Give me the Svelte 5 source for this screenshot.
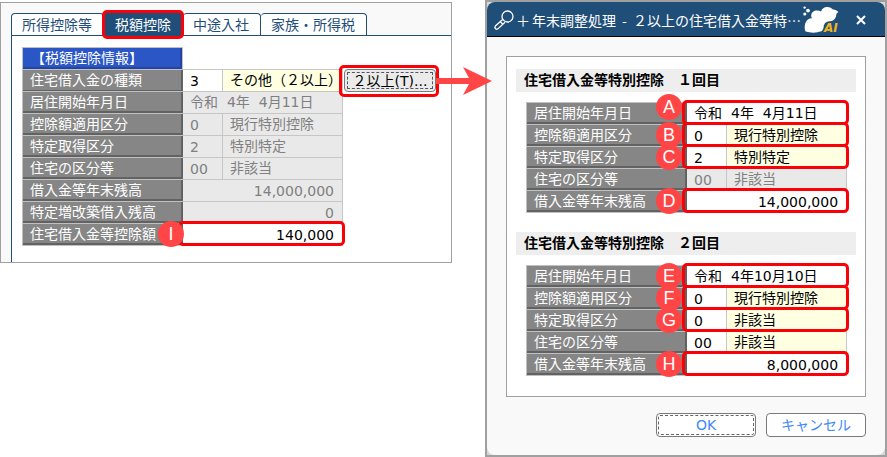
<script lang="ts">
  interface Field {
    id: string;
    label: string;
    value: string;
    name?: string;
    amount?: boolean;
    disabled?: boolean;
    mark?: string;
    raised?: boolean;
    action?: string;
  }

  interface Section {
    title: string;
    fields: Field[];
  }

  const tabs = ['所得控除等', '税額控除', '中途入社', '家族・所得税'];
  let activeTab = $state('税額控除');

  // Dates are padded with figure spaces so that the digits line up
  const deduction: Field[] = [
    { id: 'kind', label: '住宅借入金の種類', value: '3', name: 'その他（２以上）', action: '２以上(T)...' },
    { id: 'start', label: '居住開始年月日', value: '令和\u20074年\u20074月11日', disabled: true },
    { id: 'apply', label: '控除額適用区分', value: '0', name: '現行特別控除', disabled: true },
    { id: 'acquire', label: '特定取得区分', value: '2', name: '特別特定', disabled: true },
    { id: 'house', label: '住宅の区分等', value: '00', name: '非該当', disabled: true },
    { id: 'balance', label: '借入金等年末残高', value: '14,000,000', amount: true, disabled: true },
    { id: 'extension', label: '特定増改築借入残高', value: '0', amount: true, disabled: true },
    { id: 'credit', label: '住宅借入金等控除額', value: '140,000', amount: true, mark: 'I' },
  ];

  const sections: Section[] = [
    {
      title: '住宅借入金等特別控除　１回目',
      fields: [
        { id: 'start1', label: '居住開始年月日', value: '令和\u20074年\u20074月11日', mark: 'A', raised: true },
        { id: 'apply1', label: '控除額適用区分', value: '0', name: '現行特別控除', mark: 'B' },
        { id: 'acquire1', label: '特定取得区分', value: '2', name: '特別特定', mark: 'C' },
        { id: 'house1', label: '住宅の区分等', value: '00', name: '非該当', disabled: true },
        { id: 'balance1', label: '借入金等年末残高', value: '14,000,000', amount: true, mark: 'D' },
      ],
    },
    {
      title: '住宅借入金等特別控除　２回目',
      fields: [
        { id: 'start2', label: '居住開始年月日', value: '令和\u20074年10月10日', mark: 'E' },
        { id: 'apply2', label: '控除額適用区分', value: '0', name: '現行特別控除', mark: 'F' },
        { id: 'acquire2', label: '特定取得区分', value: '0', name: '非該当', mark: 'G' },
        { id: 'house2', label: '住宅の区分等', value: '00', name: '非該当' },
        { id: 'balance2', label: '借入金等年末残高', value: '8,000,000', amount: true, mark: 'H' },
      ],
    },
  ];
</script>

{#snippet row(field: Field)}
  <div class="row" class:disabled={field.disabled}>
    <label for={field.id}>{field.label}</label>
    <input
      id={field.id}
      class:date={!field.name && !field.amount}
      class:amount={field.amount}
      type="text"
      value={field.value}
      disabled={field.disabled}
    />
    {#if field.name}
      <output for={field.id}>{field.name}</output>
    {/if}
    {#if field.action}
      <button class="button action" type="button">
        {field.action}
        <span class="outline"></span>
        <svg class="arrow" viewBox="0 0 56 28" aria-hidden="true">
          <path d="M0 11H33L27 0L56 14L27 28L33 17H0Z" />
        </svg>
      </button>
    {/if}
    {#if field.mark}
      <span class="outline"></span>
      <span class="badge" class:raised={field.raised}>{field.mark}</span>
    {/if}
  </div>
{/snippet}

<main>
  <section class="window">
    <div class="tabs" role="tablist">
      {#each tabs as tab}
        <button
          class="tab"
          class:active={tab === activeTab}
          type="button"
          role="tab"
          aria-selected={tab === activeTab}
          onclick={() => (activeTab = tab)}
        >
          {tab}
        </button>
      {/each}
    </div>
    <div class="page">
      <h2 class="caption">【税額控除情報】</h2>
      <div class="rows">
        {#each deduction as field}
          {@render row(field)}
        {/each}
      </div>
    </div>
  </section>

  <section class="dialog" role="dialog" aria-labelledby="dialog-title">
    <div class="frame">
      <header>
        <svg class="lens" viewBox="0 0 20 20" aria-hidden="true">
          <circle cx="13.5" cy="6.5" r="5.5" />
          <path d="M8.6 9.6L1.4 16Q.4 17.6 1.6 18.8Q3 19.8 4.4 18.4L11 12.2" />
          <path d="M6.4 11.8L8.8 14.2" />
        </svg>
        <span>＋</span>
        <h1 id="dialog-title">
          <span>年末調整処理</span><span>-</span><span>２以上の住宅借入金等特…</span>
        </h1>
        <svg class="cloud" viewBox="0 0 40 28" aria-hidden="true">
          <circle cx="1.6" cy="1.6" r="1.2" />
          <circle cx="5" cy="4.6" r="1.9" />
          <circle cx="1.8" cy="8" r="1.6" />
          <path
            d="M2.5 25.5C1 22 1.5 16 5 13.5Q7 12 9 12.3C7 9 9 5 13 4.5Q16 4 18 5.5C19 2 22 .5 25 1Q28 1.2 30 3.5Q33 3.2 35.5 6Q33 7 33 10.5C32 14 29 15.5 26.5 15.2C22 15.5 21 18 20.5 22L19 25Q11 28 2.5 25.5Z"
          />
          <text x="21" y="26">AI</text>
        </svg>
        <button class="close" type="button" aria-label="閉じる">
          <svg viewBox="0 0 10 10" aria-hidden="true"><path d="M1 1L9 9M9 1L1 9" /></svg>
        </button>
      </header>
      <div class="body">
        <div class="panel">
          {#each sections as section}
            <h2>{section.title}</h2>
            <div class="rows">
              {#each section.fields as field}
                {@render row(field)}
              {/each}
            </div>
          {/each}
        </div>
        <footer>
          <button class="button primary" type="button">OK</button>
          <button class="button" type="button">キャンセル</button>
        </footer>
      </div>
    </div>
  </section>
</main>

<style>
  :global(body) {
    margin: 0;
    background: #fff;
  }

  main,
  button,
  input {
    font-family: 'DejaVu Sans', 'Noto Sans CJK JP', sans-serif;
    font-size: 14px;
    line-height: 20px;
  }

  main,
  main * {
    box-sizing: border-box;
  }

  main {
    display: grid;
    grid-template-columns: 9fr 8fr;
    align-items: start;
    gap: 33px;
  }

  h1,
  h2 {
    margin: 0;
    font-size: 14px;
    font-weight: 400;
  }

  .window {
    margin-top: 2px;
    padding: 10px 0 0 10px;
    border: 1px solid #a0a0a0;
    background: #f9f9f9;
  }

  .tabs {
    display: flex;
    height: 23px;
    border-bottom: 1px solid #1f4e79;
  }

  .tab {
    height: 22px;
    padding: 0 11px 0 10px;
    border: 1px solid #1f4e79;
    border-bottom: none;
    border-left-width: 0;
    border-radius: 4px 4px 0 0;
    background: #fff;
    color: #1f4e79;
    white-space: nowrap;
  }

  .tab:first-child {
    border-left-width: 1px;
  }

  .tab.active {
    z-index: 1;
    margin: -2px 0 -3px -1px;
    height: 27px;
    padding: 0 12px;
    border: none;
    border-radius: 4px;
    outline: 3px solid #fb0007;
    outline-offset: -2px;
    background: #1f4e79;
    color: #fff;
  }

  .page {
    padding: 11px 10px 16px;
    border-left: 1px solid #1f4e79;
    background: #fff;
  }

  .caption {
    width: 161px;
    height: 22px;
    padding-left: 8px;
    border: 1px solid #c0c0c0;
    border-bottom: none;
    box-shadow: inset -2px -2px #2244a4;
    background: #2a56c6;
    color: #fff;
  }

  .rows {
    border-bottom: 1px solid #c0c0c0;
    width: 321px;
  }

  .row {
    position: relative;
    display: grid;
    grid-template-columns: 161px 40px 120px auto;
    height: 22px;
  }

  label {
    padding-left: 7px;
    border-top: 1px solid #c0c0c0;
    border-left: 1px solid #c0c0c0;
    box-shadow: inset -2px -2px #626262;
    background: #868686;
    color: #fff;
    white-space: nowrap;
  }

  input,
  output {
    min-width: 0;
    height: 22px;
    margin: 0;
    padding: 0 7px;
    border: 0 solid #c6c6c6;
    border-width: 1px 1px 0 0;
    border-radius: 0;
    background: #fff;
    color: #000;
    white-space: nowrap;
  }

  input.date,
  input.amount {
    grid-column: span 2;
  }

  input.date {
    padding-bottom: 4px;
  }

  input.amount {
    padding-right: 8px;
    text-align: right;
  }

  output {
    background: #ffffe1;
  }

  .disabled input,
  .disabled output {
    background: #e9e9e9;
    color: #808080;
  }

  .outline {
    position: absolute;
    inset: -2px -2px -1px 156px;
    z-index: 1;
    border: 3px solid #fb0007;
    border-radius: 5px;
    pointer-events: none;
  }

  .badge {
    position: absolute;
    top: -2px;
    left: 130px;
    z-index: 2;
    width: 26px;
    height: 26px;
    border-radius: 50%;
    background: #ff4545;
    color: #fff;
    font-family: 'Liberation Sans', sans-serif;
    font-size: 18px;
    line-height: 26px;
    text-align: center;
  }

  /* The label is longer in the main window */
  .window .badge {
    left: 136px;
  }

  .badge.raised {
    top: -8px;
  }

  .button {
    width: 100px;
    height: 24px;
    padding: 0;
    border: 1px solid #7a7a7a;
    border-radius: 4px;
    background: #fff;
    color: #3f88f5;
    white-space: nowrap;
  }

  .button.primary {
    outline: 1px dashed #666;
    outline-offset: -3px;
  }

  .button.action {
    position: relative;
    width: 92px;
    height: 23px;
    margin-left: 1px;
    outline: 1px dashed #555;
    outline-offset: -4px;
    background: #ebebeb;
    color: #000;
  }

  .action .outline {
    inset: -5px -4px -6px -6px;
  }

  .arrow {
    position: absolute;
    top: -3px;
    left: 91px;
    z-index: 2;
    width: 56px;
    height: 28px;
    fill: #ff4545;
  }

  .dialog {
    border: 2px solid #a0a0a0;
    background: #d8d8d8;
  }

  .frame {
    overflow: hidden;
    border-radius: 8px;
    background: #f9f9f9;
  }

  header {
    display: flex;
    align-items: center;
    height: 35px;
    padding: 2px 18px 0 7px;
    border-bottom: 1px solid #000;
    background: #1f4e79;
    color: #fff;
    font-family: 'Noto Sans CJK JP', sans-serif;
  }

  .lens {
    flex: none;
    width: 20px;
    height: 20px;
    margin-right: 2px;
    fill: none;
    stroke: #fff;
    stroke-width: 1.3;
  }

  h1 {
    display: flex;
    gap: 6px;
    margin-left: 2px;
    white-space: nowrap;
  }

  .cloud {
    flex: none;
    width: 40px;
    height: 28px;
    margin-left: 2px;
    fill: #fff;
  }

  .cloud text {
    fill: #f0b41e;
    font: italic bold 12px 'DejaVu Sans', sans-serif;
  }

  .close {
    width: 12px;
    height: 12px;
    margin-left: auto;
    padding: 1px;
    border: none;
    background: none;
  }

  .close svg {
    display: block;
    width: 10px;
    height: 10px;
    stroke: #fff;
    stroke-width: 2;
  }

  .body {
    padding: 19px 19px 18px;
  }

  .panel {
    padding: 12px 9px 1px;
    border: 1px solid #a0a0a0;
    background: #fff;
  }

  .panel h2 {
    height: 23px;
    padding-left: 8px;
    background: #eee;
    font-weight: 700;
    line-height: 23px;
  }

  .panel .rows {
    margin: 10px 0 19px 10px;
  }

  footer {
    display: flex;
    justify-content: flex-end;
    gap: 10px;
    margin-top: 16px;
  }
</style>
